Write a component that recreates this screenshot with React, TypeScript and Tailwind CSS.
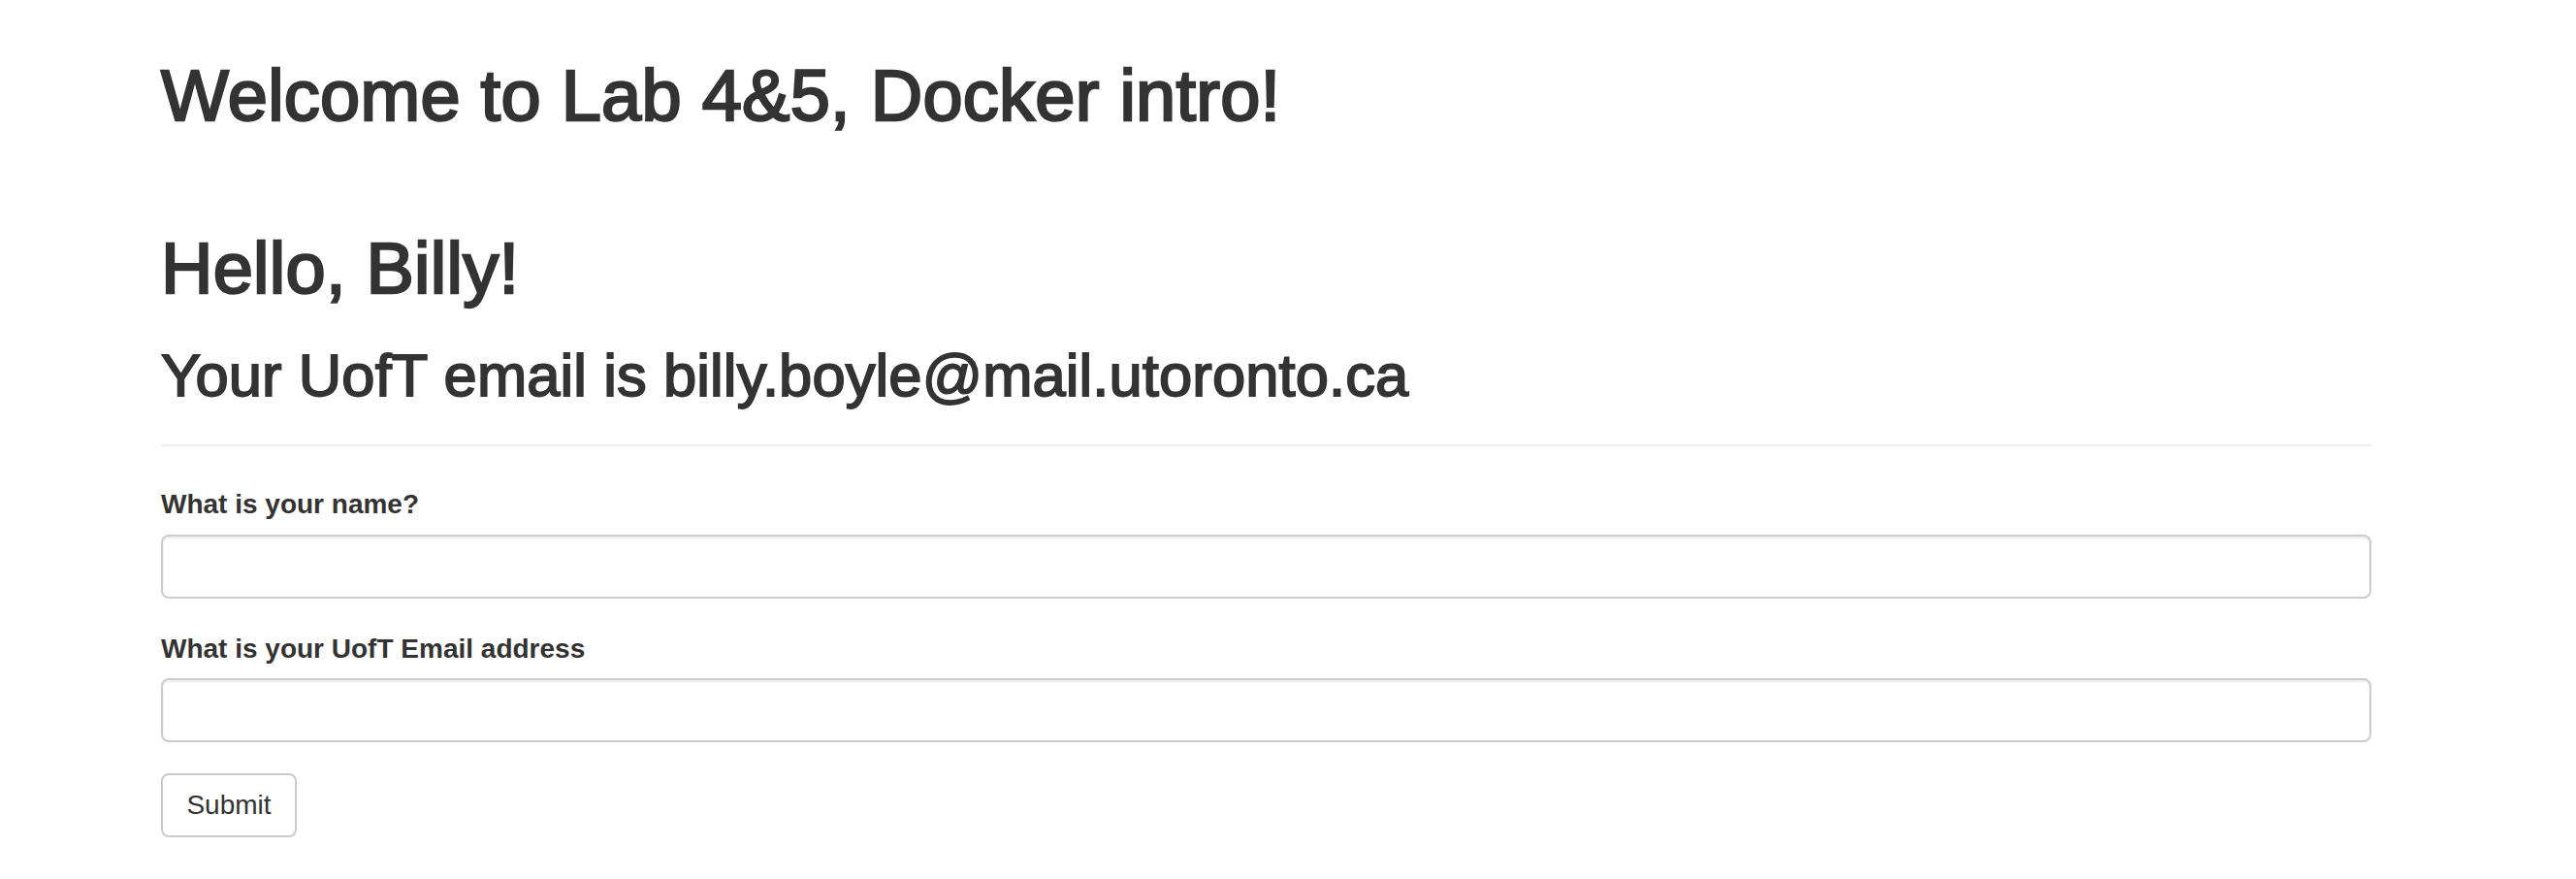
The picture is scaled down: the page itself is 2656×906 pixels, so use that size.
import React from "react";

export default function App() {
  return (
    <div className="min-h-[906px] w-full bg-white text-[#333333] font-['Liberation_Sans',Arial,sans-serif]">
      <div className="ml-[166px] w-[2279px] pt-[58px]">
        <h1 className="text-[74px] leading-[81px] font-normal tracking-[0.25px] [-webkit-text-stroke:2.4px_#333333]">Welcome to Lab 4&amp;5, Docker intro!</h1>
        <h1 className="mt-[97px] text-[74px] leading-[81px] font-normal tracking-[0.25px] [-webkit-text-stroke:2.4px_#333333]">Hello, Billy!</h1>
        <h2 className="mt-[36px] text-[61.5px] leading-[67px] font-normal tracking-[0.1px] [-webkit-text-stroke:1.8px_#333333]">Your UofT email is billy.boyle@mail.utoronto.ca</h2>
        <hr className="mt-[38px] border-0 border-t-2 border-[#eeeeee]" />
        <form className="mt-[40px]" onSubmit={(e) => e.preventDefault()}>
          <div className="mb-[32px]">
            <label className="block text-[28px] leading-[40px] font-bold mb-[11px]">What is your name?</label>
            <input
              type="text"
              className="block w-full h-[66px] border-2 border-[#cccccc] rounded-[8px] bg-white px-[24px] text-[28px] shadow-[inset_0_2px_2px_rgba(0,0,0,0.075)] outline-none"
            />
          </div>
          <div className="mb-[32px]">
            <label className="block text-[28px] leading-[40px] font-bold mb-[10px]">What is your UofT Email address</label>
            <input
              type="text"
              className="block w-full h-[66px] border-2 border-[#cccccc] rounded-[8px] bg-white px-[24px] text-[28px] shadow-[inset_0_2px_2px_rgba(0,0,0,0.075)] outline-none"
            />
          </div>
          <button
            type="submit"
            className="h-[66px] w-[140px] border-2 border-[#cccccc] rounded-[8px] bg-white text-[28px] leading-[40px] text-[#333333]"
          >
            Submit
          </button>
        </form>
      </div>
    </div>
  );
}
